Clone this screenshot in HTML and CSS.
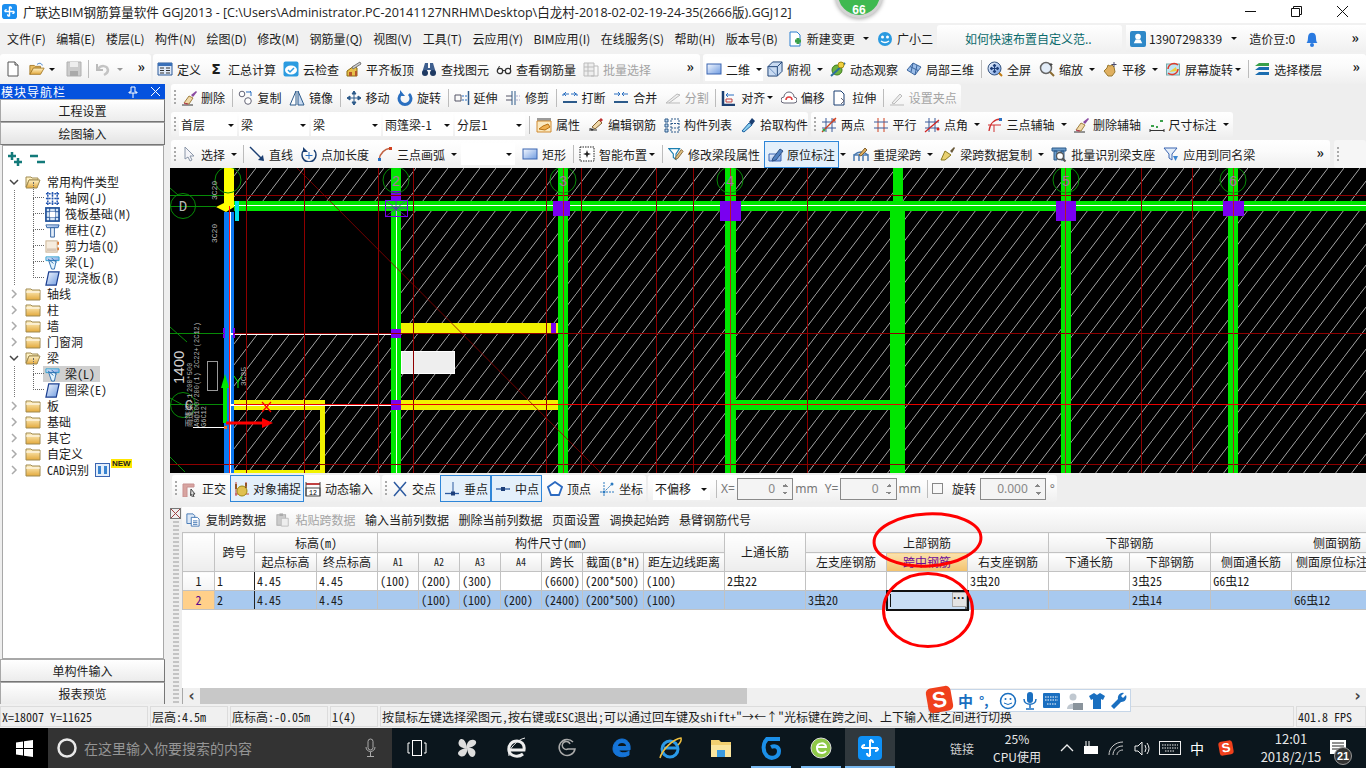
FILE: index.html
```html
<!DOCTYPE html>
<html lang="zh-CN">
<head>
<meta charset="utf-8">
<title>广联达BIM钢筋算量软件 GGJ2013</title>
<link rel="stylesheet" href="styles.css">
</head>
<body>
<svg class="defs" xmlns="http://www.w3.org/2000/svg">
<defs>
<linearGradient id="gb" x1="0" y1="0" x2="1" y2="1"><stop offset="0" stop-color="#f4f8ff"/><stop offset="1" stop-color="#6f9be0"/></linearGradient>
<linearGradient id="gf" x1="0" y1="0" x2="0" y2="1"><stop offset="0" stop-color="#fff3c8"/><stop offset="1" stop-color="#e3a93c"/></linearGradient>
<pattern id="hatch" width="16" height="21" patternUnits="userSpaceOnUse" x="0" y="0"><path d="M-1 22.300L17 -1.300" stroke="#cfcfcf" stroke-width=".8" fill="none"/></pattern>
<symbol id="new" viewBox="0 0 16 16"><path d="M3 1h7l3 3v11H3z" fill="#fff" stroke="#555"/><path d="M10 1v3h3" fill="#ddd" stroke="#555"/></symbol>
<symbol id="open" viewBox="0 0 18 16"><path d="M1 14V4h5l1 1h6v2H5z" fill="#e8bd64" stroke="#a67a28"/><path d="M1 14h12l4-7H5z" fill="url(#gf)" stroke="#a67a28"/><path d="M9 3c2-2 5-2 6 1" fill="none" stroke="#2a6fc0"/></symbol>
<symbol id="save" viewBox="0 0 16 16"><path d="M1 1h14v14H1z" fill="#ccc" stroke="#b0b0b0"/><path d="M4 1h8v5H4z" fill="#eee"/><path d="M4 10h8v5H4z" fill="#aaa"/></symbol>
<symbol id="undo" viewBox="0 0 16 16"><path d="M2 3v6h6" fill="none" stroke="#bbb" stroke-width="2"/><path d="M3 8c3-4 9-4 10 1 0 2-2 4-4 5" fill="none" stroke="#c4c4c4" stroke-width="2.5"/></symbol>
<symbol id="def" viewBox="0 0 16 16"><path d="M1 2h14v12H1z" fill="#dfe9f7" stroke="#2c5a9a"/><path d="M1 2h14v3H1z" fill="#3a70b8"/><path d="M3 7h4M3 9.5h4M3 12h4M9 7h4M9 9.5h4M9 12h4" stroke="#333"/></symbol>
<symbol id="cloud" viewBox="0 0 16 16"><rect x="0.5" y="0.5" width="15" height="15" rx="2" fill="#2b9be0"/><ellipse cx="8" cy="9" rx="6" ry="4.5" fill="#fff"/><path d="M5 9l2 2 4-4" fill="none" stroke="#2b9be0" stroke-width="1.5"/></symbol>
<symbol id="level" viewBox="0 0 16 16"><path d="M1 10l7-5 3 2v8H1z" fill="#e8c04a" stroke="#8a6a10"/><path d="M6 6l8-5 1 2-8 5z" fill="#cfcfcf" stroke="#777"/><path d="M3 11h3v4H3zM9 10h2v5H9z" fill="#b5562a"/></symbol>
<symbol id="bino" viewBox="0 0 16 16"><path d="M4 2h3v5h2V2h3l3 10H10V9H6v3H1z" fill="#3e5f8f"/><circle cx="4" cy="12" r="3" fill="#1f3a62"/><circle cx="12" cy="12" r="3" fill="#1f3a62"/></symbol>
<symbol id="glass" viewBox="0 0 16 16"><circle cx="4" cy="10" r="2.7" fill="#fff" stroke="#333" stroke-width="1.3"/><circle cx="12" cy="10" r="2.7" fill="#fff" stroke="#333" stroke-width="1.3"/><path d="M6.5 9.5h3M1.5 9l2-4M14.5 9V4" fill="none" stroke="#333"/></symbol>
<symbol id="batch" viewBox="0 0 16 16"><path d="M1 2h10v13H1z" fill="#eee" stroke="#bbb"/><path d="M1 6h10M1 10h10M5 2v13M11 5h4v10H8" fill="none" stroke="#bbb"/></symbol>
<symbol id="rect" viewBox="0 0 16 16"><rect x="1" y="3" width="14" height="10" fill="url(#gb)" stroke="#3a64b0"/></symbol>
<symbol id="cube" viewBox="0 0 17 17"><path d="M1 6l5-5h10v10l-5 5H1z" fill="#c9dbf2" stroke="#1b3f72"/><path d="M1 6h10l5-5M11 6v10" fill="none" stroke="#1b3f72"/><path d="M1 6l10 10" stroke="#6d8fc0"/></symbol>
<symbol id="orbit" viewBox="0 0 16 16"><circle cx="7" cy="9" r="5" fill="#6db33f" stroke="#3d7a1d"/><path d="M1 15L15 2" stroke="#2c6e9e" stroke-width="2"/><circle cx="11" cy="4" r="3" fill="#f0d040" stroke="#a08a10"/></symbol>
<symbol id="local" viewBox="0 0 16 16"><path d="M1 9l6-7 8 4-6 8z" fill="#9bbde8" stroke="#3c669e"/><path d="M4 5.500l8 4M7 2l-2 9M11 4l-2 10" stroke="#3c669e" fill="none"/></symbol>
<symbol id="full" viewBox="0 0 16 16"><circle cx="7.500" cy="7.500" r="6.500" fill="url(#gb)" stroke="#33527e"/><path d="M7.500 3v9M3 7.500h9M7.500 3l-1.500 2h3zM7.500 12l-1.500-2h3zM3 7.500l2-1.500v3zM12 7.500l-2-1.500v3z" stroke="#1d3f7a" fill="#1d3f7a"/><path d="M12 12l3 3" stroke="#c07a10" stroke-width="2"/></symbol>
<symbol id="zoomi" viewBox="0 0 16 16"><circle cx="7" cy="7" r="5.500" fill="#e2ecf8" stroke="#666" stroke-width="1.500"/><path d="M11 11l4 4" stroke="#8a6a30" stroke-width="2"/><path d="M12 2v3M10.500 3.500h3" stroke="#444"/></symbol>
<symbol id="hand" viewBox="0 0 16 16"><path d="M2 10l3-3 1-3 2 1 2-1 2 2 1 5-3 4H6z" fill="#e0b060" stroke="#9a7a30"/><path d="M12 1v5M9.500 3.500h5" stroke="#4a4a6a"/></symbol>
<symbol id="srot" viewBox="0 0 16 16"><rect x="1.500" y="3" width="13" height="11" fill="#bfe4f4" stroke="#7aa"/><path d="M4 11l7-5 1 4z" fill="#f0d040"/><path d="M3 8a6 6 0 0 1 10-4M13 8a6 6 0 0 1-10 4" fill="none" stroke="#e03a2a" stroke-width="1.500"/></symbol>
<symbol id="floors" viewBox="0 0 16 16"><path d="M1 14l4-3h10v3zM1 9l4-3h10v3z" fill="#1b6db0"/><path d="M1 5l4-3h10v3z" fill="#3aa04a"/></symbol>
<symbol id="erase" viewBox="0 0 16 16"><path d="M1 15h11" stroke="#333"/><path d="M10 5l5-4 1 1-4 5z" fill="#8a4aa0"/><path d="M3 13l5-7 4 2-4 6z" fill="#f0d8a8" stroke="#a08040"/><path d="M3 13l2 1 2 0" stroke="#d04060"/></symbol>
<symbol id="copy" viewBox="0 0 16 16"><circle cx="4" cy="4" r="2.800" fill="#fff" stroke="#667"/><circle cx="10" cy="11" r="3.300" fill="#fff" stroke="#667"/><path d="M8 2h5l-1-1m1 1v4" fill="none" stroke="#2a6fc0"/></symbol>
<symbol id="mirror" viewBox="0 0 16 16"><path d="M7 1v14H1z" fill="#fff" stroke="#2c5a8a"/><path d="M9 1v14h6z" fill="#c9dbf2" stroke="#2c5a8a"/></symbol>
<symbol id="move" viewBox="0 0 16 16"><path d="M8 1v14M1 8h14M8 1L6 4h4zM8 15l-2-3h4zM1 8l3-2v4zM15 8l-3-2v4z" stroke="#2c5a8a" fill="#2c5a8a"/></symbol>
<symbol id="rot" viewBox="0 0 16 16"><path d="M4 4a6 6 0 1 0 8 0" fill="none" stroke="#2a6fc0" stroke-width="3"/><path d="M3 0v6h5z" fill="#2a6fc0"/></symbol>
<symbol id="ext" viewBox="0 0 16 16"><path d="M14.500 1v14" stroke="#2c5a8a" stroke-width="1.500"/><path d="M1 5h6v6H1z" fill="none" stroke="#556"/><path d="M8 6h5M8 10h5" stroke="#2a6fc0" stroke-dasharray="2 1"/></symbol>
<symbol id="trim" viewBox="0 0 16 16"><path d="M7 1v14M10 1v14" stroke="#2c5a8a"/><path d="M1 6h6M1 10h6" stroke="#556"/><path d="M11 6h4M11 10h4" stroke="#aac" stroke-dasharray="2 1"/></symbol>
<symbol id="brk" viewBox="0 0 16 16"><path d="M1 6V4h6M15 6V4H9" fill="none" stroke="#2a6fc0"/><path d="M1 12h14" stroke="#2c5a8a" stroke-width="2"/><path d="M4 2l-2 2 2 2M12 2l2 2-2 2" fill="none" stroke="#2a6fc0"/></symbol>
<symbol id="mrg" viewBox="0 0 16 16"><path d="M1 4h6M9 4h6" stroke="#2a6fc0"/><path d="M5 2l2 2-2 2M11 2L9 4l2 2" fill="none" stroke="#2a6fc0"/><path d="M1 12h14" stroke="#2c5a8a" stroke-width="2"/></symbol>
<symbol id="spl" viewBox="0 0 16 16"><path d="M1 13h14M1 13l11-9 3 1-11 8" fill="#eee" stroke="#bbb"/></symbol>
<symbol id="alg" viewBox="0 0 16 16"><path d="M2 1v14h12" fill="none" stroke="#1b3f72" stroke-width="2.500"/><path d="M5 5h8M5 5l2-2M5 5l2 2" fill="none" stroke="#2a6fc0"/><path d="M5 9h6v3H5z" fill="none" stroke="#c04040"/></symbol>
<symbol id="off" viewBox="0 0 16 16"><path d="M3 13a3 3 0 0 1 0-6 5 5 0 0 1 10 0 3 3 0 0 1 0 6z" fill="#fff" stroke="#667"/><path d="M5 10a3 3 0 0 1 6 0" fill="none" stroke="#e04040" stroke-width="1.500"/></symbol>
<symbol id="strc" viewBox="0 0 16 16"><path d="M2 1h7l3 3v11H2z" fill="#fff" stroke="#1b3f72"/><path d="M9 8l3 3-3 3" fill="none" stroke="#667"/></symbol>
<symbol id="grip2" viewBox="0 0 16 16"><path d="M1 15h14M3 13l8-9 2 2-8 8z" fill="#eee" stroke="#bbb"/></symbol>
<symbol id="prop" viewBox="0 0 16 16"><path d="M1 1h14v3H1z" fill="#9a9a9a"/><path d="M1 4h14v11H1z" fill="#fbe9c0" stroke="#d08a30"/><path d="M3 12l4-3 5-2 2 3-5 3z" fill="#f0b050" stroke="#b87010"/></symbol>
<symbol id="edit" viewBox="0 0 16 16"><path d="M1 13h8" stroke="#333"/><path d="M4 10l7-7 3 3-7 6z" fill="#f0d8a8" stroke="#806030"/><path d="M1 11l5 1-2 2" fill="#333"/><path d="M11 3l2-2 2 2-2 2" fill="#c03030"/></symbol>
<symbol id="list" viewBox="0 0 16 16"><path d="M1 2h3v3H1zM1 7h3v3H1zM1 12h3v3H1z" fill="#c0d8ee" stroke="#2c5a8a"/><path d="M7 2h8v13H7zM7 6.500h8M7 11h8" fill="none" stroke="#2c5a8a" stroke-dasharray="2 1"/></symbol>
<symbol id="pick" viewBox="0 0 16 16"><path d="M2 14l7-8 3 2-8 7z" fill="#8ad0f0" stroke="#1b5fa0"/><path d="M9 5l3-4 3 3-3 4z" fill="#1b3f72"/></symbol>
<symbol id="twop" viewBox="0 0 16 16"><path d="M5 1v14M11 1v14M1 5h14M1 11h14" stroke="#3a5a9a"/><path d="M1 15L15 1" stroke="#d04020" stroke-width="1.200"/><circle cx="3" cy="13" r="1.500" fill="#3aa04a"/><circle cx="13" cy="3" r="1.500" fill="#d04020"/></symbol>
<symbol id="para" viewBox="0 0 16 16"><path d="M5 1v14M11 1v14" stroke="#d04020"/><path d="M1 5h14M1 11h14" stroke="#3a5a9a"/></symbol>
<symbol id="angl" viewBox="0 0 16 16"><path d="M5 1v14M11 1v14M1 5h14M1 11h14" stroke="#3a5a9a"/><path d="M1 15L15 3" stroke="#d02020" stroke-width="1.200"/><circle cx="14" cy="12" r="1.500" fill="#d02020"/></symbol>
<symbol id="arca" viewBox="0 0 16 16"><path d="M1 8h13M7 8v7" stroke="#d03030"/><path d="M2 14C3 6 8 2 14 2" fill="none" stroke="#d03030" stroke-width="1.300"/><rect x="12" y="1" width="3" height="3" fill="#2a6fc0"/></symbol>
<symbol id="dim" viewBox="0 0 16 16"><path d="M1 12v3M15 12v3M1 13.500h14" stroke="#333"/><path d="M2 8h3v2H2zM11 3h3v2h-3z" fill="#3aa04a"/><path d="M7 9h2v2H7z" fill="#3aa04a"/></symbol>
<symbol id="sel" viewBox="0 0 16 16"><path d="M4 1v12l3-2 2 4 2-1-2-4h4z" fill="#f4f4f8" stroke="#8a96a8"/></symbol>
<symbol id="line" viewBox="0 0 16 16"><path d="M1 1l13 13" stroke="#1b3f72" stroke-width="1.500"/><path d="M15 15l-6-1 5-5z" fill="#1b3f72"/></symbol>
<symbol id="plen" viewBox="0 0 16 16"><path d="M3 4a7 7 0 1 0 10 0" fill="none" stroke="#1b3f72" stroke-width="1.500"/><path d="M2 1v5h5z" fill="#1b3f72"/><path d="M8 6v7M4.500 9.500h7" stroke="#2a6fc0"/></symbol>
<symbol id="arc" viewBox="0 0 16 16"><path d="M2 14C3 6 8 3 14 2" fill="none" stroke="#c06040" stroke-width="1.500"/><rect x="1" y="12" width="3" height="3" fill="#2a6fc0"/><rect x="12" y="1" width="3" height="3" fill="#d04020"/></symbol>
<symbol id="smart" viewBox="0 0 16 16"><rect x="1" y="1" width="14" height="14" fill="#fff" stroke="#222" stroke-dasharray="1.500 1"/><path d="M8 4l1 3 3 1-3 1-1 3-1-3-3-1 3-1z" fill="#222"/></symbol>
<symbol id="modi" viewBox="0 0 18 16"><path d="M1 2h12L9 8v6L6 12V8z" fill="#fff" stroke="#1b7fb0" stroke-width="1.300"/><path d="M9 11l6-8 2 2-6 8-3 1z" fill="#e0c080" stroke="#806030"/></symbol>
<symbol id="inpl" viewBox="0 0 16 16"><path d="M1 8h12v7H1z" fill="url(#gb)" stroke="#3a64b0"/><path d="M5 12l7-9 3 2-7 9-4 1z" fill="#5080c0" stroke="#304f80"/></symbol>
<symbol id="rext" viewBox="0 0 16 16"><path d="M1 15V9h5v6M10 15V9h5v6" fill="none" stroke="#4a7ab0" stroke-width="1.500"/><path d="M1 9q7-6 14 0" fill="none" stroke="#4a7ab0" stroke-width="1.500"/><path d="M6 9l6-7 2 2-6 6z" fill="#e0b060" stroke="#806030"/></symbol>
<symbol id="brm" viewBox="0 0 16 16"><path d="M10 5l4-4 1 1-3 5z" fill="#6a5a3a"/><path d="M1 14l4-9 6 4-6 5z" fill="#e8d070" stroke="#8a7a20"/></symbol>
<symbol id="bid" viewBox="0 0 16 16"><path d="M1 2h14v3H1zM3 5h3v9H3zM10 5h3v9h-3z" fill="#6a9ac8" stroke="#2c5a8a"/><circle cx="9" cy="10" r="3.500" fill="#fff" stroke="#555" stroke-width="1.300"/><path d="M11.500 12.500l3 3" stroke="#555" stroke-width="2"/></symbol>
<symbol id="appl" viewBox="0 0 16 16"><path d="M1 2h13L9 8v6L6 12V8z" fill="#e4eefa" stroke="#3a64b0"/><path d="M10 10h5l-2.500 5z" fill="#3a84d0"/></symbol>
<symbol id="orth" viewBox="0 0 16 16"><path d="M1 3h11v3H5v10H1z" fill="#d8a4a0" stroke="#c89090"/><path d="M9 8l4 5-2 0 1 3-1.500 .5-1-3-1 1z" fill="#ddd" stroke="#444"/></symbol>
<symbol id="snap" viewBox="0 0 16 16"><path d="M2 1v14M12 1v4M1 13h14" stroke="#c04040"/><circle cx="8" cy="10" r="5" fill="#e0c050" stroke="#a08a10"/><path d="M12 2v5M2 3v5" stroke="#804000" stroke-width="1.500"/></symbol>
<symbol id="dyn" viewBox="0 0 16 16"><path d="M1 2h14v2H1z" fill="#c04040"/><rect x="1" y="7" width="14" height="8" fill="#fff" stroke="#444"/><path d="M1 1v14M15 1v14" stroke="#444"/><text x="4" y="14" font-size="6.500" font-family="Liberation Mono">12</text></symbol>
<symbol id="xp" viewBox="0 0 16 16"><path d="M2 1l12 14M14 1L2 15" stroke="#2c5aa0" stroke-width="1.500"/></symbol>
<symbol id="perp" viewBox="0 0 16 16"><path d="M9 1v11" stroke="#2c5aa0"/><path d="M1 12.500h14" stroke="#2c5aa0" stroke-width="1.300"/><rect x="7" y="10.500" width="4" height="4" fill="#1d3f7a"/></symbol>
<symbol id="midp" viewBox="0 0 16 16"><path d="M1 8h14" stroke="#2c5aa0" stroke-width="1.300"/><rect x="6" y="6" width="4" height="4" fill="#1d3f7a"/></symbol>
<symbol id="vert" viewBox="0 0 16 16"><path d="M8 1l7 5-3 8H4L1 6z" fill="#fff" stroke="#2c6ac0" stroke-width="1.800"/></symbol>
<symbol id="coord" viewBox="0 0 16 16"><path d="M5 1v14M1 11h14M5 11L13 3" stroke="#2c7ac0" stroke-dasharray="2 1"/><circle cx="13" cy="3" r="1.500" fill="#2c7ac0"/><circle cx="5" cy="11" r="1.500" fill="#2c7ac0"/></symbol>
<symbol id="cp2" viewBox="0 0 16 16"><path d="M1 1h7l2 2v9H1z" fill="#dce8f6" stroke="#3a70b0"/><path d="M6 5h7l2 2v8H6z" fill="#fff" stroke="#3a70b0"/><path d="M8 9h5M8 11h5M8 13h5" stroke="#3a70b0"/></symbol>
<symbol id="pst" viewBox="0 0 16 16"><rect x="1" y="2" width="10" height="12" fill="#ccc" stroke="#aaa"/><rect x="4" y="0.500" width="4" height="3" fill="#aaa"/><path d="M6 6h8v9H6z" fill="#eee" stroke="#bbb"/></symbol>
<symbol id="tgrid" viewBox="0 0 16 16"><path d="M3 1v14M8 1v14M13 1v14M1 3h14M1 8h14M1 13h14" stroke="#2456b0" stroke-width="1.600" stroke-dasharray="2 1"/></symbol>
<symbol id="traft" viewBox="0 0 16 16"><rect x="1" y="1" width="14" height="14" fill="#d8e8f8" stroke="#1f5098" stroke-width="1.800"/><path d="M5 1v14M11 1v14M1 5h14M1 11h14" stroke="#1f5098"/><rect x="5" y="5" width="6" height="6" fill="#fff"/></symbol>
<symbol id="tcol" viewBox="0 0 16 16"><path d="M1 2h14l-1 3H2z" fill="url(#gb)" stroke="#2c5fa0"/><path d="M6 5h4v10H6z" fill="#e4eefa" stroke="#2c5fa0"/></symbol>
<symbol id="twall" viewBox="0 0 16 16"><rect x="1" y="2" width="12" height="12" fill="#f6ecde" stroke="#c8b090"/><path d="M2 10h10v3H2z" fill="#d8c8b8"/><path d="M14 3v3M14 9v3" stroke="#d06010" stroke-width="1.500"/></symbol>
<symbol id="tbeam" viewBox="0 0 16 16"><path d="M1 2h14v4H1z" fill="url(#gb)" stroke="#2c9fd0"/><path d="M4 6h8l-2 9H7z" fill="#e4f4fc" stroke="#2c6fb0"/><path d="M3 4l6 5M7 3l5 5" stroke="#2c6fb0"/></symbol>
<symbol id="tslab" viewBox="0 0 16 16"><path d="M4 1h11l-3 14H1z" fill="url(#gb)" stroke="#1b3f90" stroke-width="1.300"/></symbol>
<symbol id="fldo" viewBox="0 0 16 14"><path d="M1 12V2h5l1 1h6v2H4z" fill="#fff1c0" stroke="#a08a50"/><path d="M1 13h11l3-8H4z" fill="url(#gf)" stroke="#a08a50"/></symbol>
<symbol id="fldc" viewBox="0 0 16 14"><path d="M1 2h5l1 1h8v10H1z" fill="url(#gf)" stroke="#a08a50"/><path d="M1 5h14" stroke="#fff"/></symbol>
<symbol id="chevr" viewBox="0 0 8 10"><path d="M2 1l4 4-4 4" fill="none" stroke="#aaa" stroke-width="1.500"/></symbol>
<symbol id="chevd" viewBox="0 0 10 8"><path d="M1 2l4 4 4-4" fill="none" stroke="#444" stroke-width="1.500"/></symbol>
<symbol id="gf-logo" viewBox="0 0 16 16"><rect width="16" height="16" rx="3" fill="#1c8ff0"/><path d="M8 3v10M3 8h10M8 3a2 2 0 0 1 2 2M8 13a2 2 0 0 1-2-2M3 8a2 2 0 0 1 2-2M13 8a2 2 0 0 1-2 2" fill="none" stroke="#fff" stroke-width="1.500"/></symbol>
</defs>
</svg>

<div class="app">
  <header class="title">
    <svg class="logo"><use href="#gf-logo"/></svg>
    <span class="title-text">广联达BIM钢筋算量软件 GGJ2013 - [C:\Users\Administrator.PC-20141127NRHM\Desktop\白龙村-2018-02-02-19-24-35(2666版).GGJ12]</span>
    <div class="winbtns">
      <svg width="11" height="11" viewBox="0 0 11 11"><path d="M0 5.500h11" stroke="#111"/></svg>
      <svg width="11" height="11" viewBox="0 0 11 11"><path d="M.5 2.500h8v8h-8zM2.500 2.500v-2h8v8h-2" fill="none" stroke="#111"/></svg>
      <svg width="11" height="11" viewBox="0 0 11 11"><path d="M0 0l11 11M11 0L0 11" stroke="#111"/></svg>
    </div>
  </header>

  <nav class="menu">
    <span class="m">文件(F)</span><span class="m">编辑(E)</span><span class="m">楼层(L)</span><span class="m">构件(N)</span><span class="m">绘图(D)</span><span class="m">修改(M)</span><span class="m">钢筋量(Q)</span><span class="m">视图(V)</span><span class="m">工具(T)</span><span class="m">云应用(Y)</span><span class="m">BIM应用(I)</span><span class="m">在线服务(S)</span><span class="m">帮助(H)</span><span class="m last-m">版本号(B)</span>
    <span class="b menu-b"><svg class="i" viewBox="0 0 16 16"><path d="M3 1h7l3 3v11H3z" fill="#fff" stroke="#2a7fd0"/><path d="M8 10h6M11 7v6" stroke="#3aa04a" stroke-width="3"/></svg>新建变更<i class="ar"></i></span>
    <span class="b menu-b"><svg class="i" viewBox="0 0 16 16"><circle cx="8" cy="8" r="7" fill="#2a9ae0"/><circle cx="5.500" cy="6" r="1.500" fill="#fff"/><circle cx="10.500" cy="6" r="1.500" fill="#fff"/><path d="M4 10q4 3 8 0" fill="none" stroke="#fff" stroke-width="1.300"/></svg>广小二</span>
    <div class="tip-card">如何快速布置自定义范..</div>
    <div class="user-card">
      <svg class="i" viewBox="0 0 17 17"><rect width="17" height="17" rx="2" fill="#2e88c8"/><circle cx="8.500" cy="6" r="3" fill="#fff"/><path d="M4 13h9l-2-4H6z" fill="#fff"/></svg>
      <span>13907298339</span><i class="ar"></i><span class="beans">造价豆:0</span>
      <svg class="i bell" viewBox="0 0 13 16"><path d="M1 12c2-2 1-5 2-8 1-3 6-3 7 0 1 3 0 6 2 8z" fill="#2a7ae0"/><circle cx="6.500" cy="14" r="2" fill="#2a7ae0"/></svg>
      <span class="more">»</span>
    </div>
  </nav>

  <div class="toprow">
    <div class="card c1">
      <svg class="i"><use href="#new"/></svg><svg class="i open"><use href="#open"/></svg><i class="ar t"></i><svg class="i save"><use href="#save"/></svg><span class="s"></span><svg class="i"><use href="#undo"/></svg><i class="ar t gr"></i><span class="more">»</span>
    </div>
    <div class="card c2">
      <span class="b"><svg class="i"><use href="#def"/></svg>定义</span>
      <span class="b"><span class="sig">Σ</span>汇总计算</span>
      <span class="b"><svg class="i"><use href="#cloud"/></svg>云检查</span>
      <span class="b"><svg class="i"><use href="#level"/></svg>平齐板顶</span>
      <span class="b"><svg class="i"><use href="#bino"/></svg>查找图元</span>
      <span class="b"><svg class="i"><use href="#glass"/></svg>查看钢筋量</span>
      <span class="b dis"><svg class="i"><use href="#batch"/></svg>批量选择</span>
      <span class="more">»</span>
    </div>
    <div class="card c3">
      <span class="b bx"><svg class="i"><use href="#rect"/></svg>二维<i class="ar"></i></span>
      <span class="b"><svg class="i"><use href="#cube"/></svg>俯视<i class="ar"></i></span>
      <span class="b"><svg class="i"><use href="#orbit"/></svg>动态观察</span>
      <span class="b"><svg class="i"><use href="#local"/></svg>局部三维</span><span class="s"></span>
      <span class="b"><svg class="i"><use href="#full"/></svg>全屏</span>
      <span class="b"><svg class="i"><use href="#zoomi"/></svg>缩放<i class="ar"></i></span>
      <span class="b"><svg class="i"><use href="#hand"/></svg>平移<i class="ar"></i></span>
      <span class="b"><svg class="i"><use href="#srot"/></svg>屏幕旋转<i class="ar n"></i></span><span class="s"></span>
      <span class="b"><svg class="i"><use href="#floors"/></svg>选择楼层</span>
      <span class="more">»</span>
    </div>
  </div>

  <div class="work">
    <aside class="nav">
      <div class="nav-head"><span>模块导航栏</span><span class="pins"><svg width="10" height="12" viewBox="0 0 10 12"><path d="M3 1h4v5h2v1H1V6h2zM5 7v5" fill="none" stroke="#fff"/></svg><svg width="9" height="9" viewBox="0 0 9 9"><path d="M0 0l9 9M9 0L0 9" stroke="#fff"/></svg></span></div>
      <button class="navbtn">工程设置</button>
      <button class="navbtn on">绘图输入</button>
      <div class="tree">
        <div class="tree-tools"><svg width="16" height="16" viewBox="0 0 16 16"><path d="M1 5h8M5 1v8M7 11h8M11 7v8" stroke="#137a7a" stroke-width="2.500"/></svg><svg width="16" height="16" viewBox="0 0 16 16"><path d="M0 5h8M7 11h8" stroke="#137a7a" stroke-width="2.500"/></svg></div>
        <div class="tr"><svg class="ch"><use href="#chevd"/></svg><svg class="fd"><use href="#fldo"/></svg><span>常用构件类型</span></div>
        <div class="tr sub"><svg class="ti"><use href="#tgrid"/></svg><span>轴网(J)</span></div>
        <div class="tr sub"><svg class="ti"><use href="#traft"/></svg><span>筏板基础(M)</span></div>
        <div class="tr sub"><svg class="ti"><use href="#tcol"/></svg><span>框柱(Z)</span></div>
        <div class="tr sub"><svg class="ti"><use href="#twall"/></svg><span>剪力墙(Q)</span></div>
        <div class="tr sub"><svg class="ti"><use href="#tbeam"/></svg><span>梁(L)</span></div>
        <div class="tr sub last"><svg class="ti"><use href="#tslab"/></svg><span>现浇板(B)</span></div>
        <div class="tr"><svg class="ch"><use href="#chevr"/></svg><svg class="fd"><use href="#fldc"/></svg><span>轴线</span></div>
        <div class="tr"><svg class="ch"><use href="#chevr"/></svg><svg class="fd"><use href="#fldc"/></svg><span>柱</span></div>
        <div class="tr"><svg class="ch"><use href="#chevr"/></svg><svg class="fd"><use href="#fldc"/></svg><span>墙</span></div>
        <div class="tr"><svg class="ch"><use href="#chevr"/></svg><svg class="fd"><use href="#fldc"/></svg><span>门窗洞</span></div>
        <div class="tr"><svg class="ch"><use href="#chevd"/></svg><svg class="fd"><use href="#fldo"/></svg><span>梁</span></div>
        <div class="tr sub selrow"><svg class="ti"><use href="#tbeam"/></svg><span>梁(L)</span></div>
        <div class="tr sub last"><svg class="ti"><use href="#tslab"/></svg><span>圈梁(E)</span></div>
        <div class="tr"><svg class="ch"><use href="#chevr"/></svg><svg class="fd"><use href="#fldc"/></svg><span>板</span></div>
        <div class="tr"><svg class="ch"><use href="#chevr"/></svg><svg class="fd"><use href="#fldc"/></svg><span>基础</span></div>
        <div class="tr"><svg class="ch"><use href="#chevr"/></svg><svg class="fd"><use href="#fldc"/></svg><span>其它</span></div>
        <div class="tr"><svg class="ch"><use href="#chevr"/></svg><svg class="fd"><use href="#fldc"/></svg><span>自定义</span></div>
        <div class="tr"><svg class="ch"><use href="#chevr"/></svg><svg class="fd"><use href="#fldc"/></svg><span>CAD识别</span><svg class="cad" viewBox="0 0 15 14"><rect x=".5" y=".5" width="14" height="13" fill="#e4eefa" stroke="#3a64b0"/><path d="M3 3h3v8H3zM9 3h3v8H9z" fill="#3a84d0"/></svg><span class="newb">NEW</span></div>
      </div>
      <button class="navbtn">单构件输入</button>
      <button class="navbtn">报表预览</button>
    </aside>

    <main class="right">
      <div class="row r2"><div class="card">
        <span class="grip"></span>
        <span class="b"><svg class="i"><use href="#erase"/></svg>删除</span><span class="s"></span>
        <span class="b"><svg class="i"><use href="#copy"/></svg>复制</span>
        <span class="b"><svg class="i"><use href="#mirror"/></svg>镜像</span><span class="s"></span>
        <span class="b"><svg class="i"><use href="#move"/></svg>移动</span>
        <span class="b"><svg class="i"><use href="#rot"/></svg>旋转</span><span class="s"></span>
        <span class="b"><svg class="i"><use href="#ext"/></svg>延伸</span>
        <span class="b"><svg class="i"><use href="#trim"/></svg>修剪</span><span class="s"></span>
        <span class="b"><svg class="i"><use href="#brk"/></svg>打断</span>
        <span class="b"><svg class="i"><use href="#mrg"/></svg>合并</span>
        <span class="b dis"><svg class="i"><use href="#spl"/></svg>分割</span><span class="s"></span>
        <span class="b"><svg class="i"><use href="#alg"/></svg>对齐<i class="ar n"></i></span>
        <span class="b"><svg class="i"><use href="#off"/></svg>偏移</span>
        <span class="b"><svg class="i"><use href="#strc"/></svg>拉伸</span><span class="s"></span>
        <span class="b dis"><svg class="i"><use href="#grip2"/></svg>设置夹点</span>
      </div></div>

      <div class="row r3">
        <div class="card c31">
          <span class="grip g-tight"></span>
          <span class="combo w58">首层<i class="ar"></i></span>
          <span class="combo w70">梁<i class="ar"></i></span>
          <span class="combo w70">梁<i class="ar"></i></span>
          <span class="combo w70">雨篷梁-1<i class="ar"></i></span>
          <span class="combo w70">分层1<i class="ar"></i></span><span class="s s3"></span>
          <span class="b"><svg class="i"><use href="#prop"/></svg>属性</span>
          <span class="b"><svg class="i"><use href="#edit"/></svg>编辑钢筋</span>
          <span class="b"><svg class="i"><use href="#list"/></svg>构件列表</span>
          <span class="b"><svg class="i"><use href="#pick"/></svg>拾取构件</span>
        </div>
        <div class="card c32">
          <span class="grip"></span>
          <span class="b"><svg class="i"><use href="#twop"/></svg>两点</span>
          <span class="b"><svg class="i"><use href="#para"/></svg>平行</span>
          <span class="b"><svg class="i"><use href="#angl"/></svg>点角<i class="ar"></i></span>
          <span class="b"><svg class="i"><use href="#arca"/></svg>三点辅轴<i class="ar"></i></span>
          <span class="b"><svg class="i"><use href="#erase"/></svg>删除辅轴</span>
          <span class="b"><svg class="i"><use href="#dim"/></svg>尺寸标注<i class="ar"></i></span>
        </div>
      </div>

      <div class="row r4">
        <div class="card c41">
          <span class="grip"></span>
          <span class="b"><svg class="i"><use href="#sel"/></svg>选择<i class="ar"></i></span><span class="s"></span>
          <span class="b"><svg class="i"><use href="#line"/></svg>直线</span>
          <span class="b"><svg class="i"><use href="#plen"/></svg>点加长度</span>
          <span class="b"><svg class="i"><use href="#arc"/></svg>三点画弧<i class="ar"></i></span>
          <span class="combo w54"><i class="ar"></i></span>
          <span class="b"><svg class="i"><use href="#rect"/></svg>矩形</span><span class="s"></span>
          <span class="b"><svg class="i"><use href="#smart"/></svg>智能布置<i class="ar n"></i></span><span class="s"></span>
          <span class="b"><svg class="i"><use href="#modi"/></svg>修改梁段属性</span>
          <span class="b act"><svg class="i"><use href="#inpl"/></svg>原位标注</span><i class="ar after"></i>
          <span class="b"><svg class="i"><use href="#rext"/></svg>重提梁跨<i class="ar"></i></span>
          <span class="b"><svg class="i"><use href="#brm"/></svg>梁跨数据复制<i class="ar"></i></span>
          <span class="b"><svg class="i"><use href="#bid"/></svg>批量识别梁支座</span>
          <span class="b"><svg class="i"><use href="#appl"/></svg>应用到同名梁</span>
          <span class="more">»</span>
        </div>
        <div class="card c42"><span class="grip"></span></div>
      </div>

      <svg class="cad-canvas" viewBox="170 168 1196 305" width="1196" height="305">
        <rect x="170" y="168" width="1196" height="305" fill="#000"/>
        <rect x="234" y="168" width="157" height="33" fill="url(#hatch)"/>
        <rect x="234" y="334" width="157" height="139" fill="url(#hatch)"/>
        <rect x="401" y="168" width="965" height="305" fill="url(#hatch)"/>
        <g class="crisp">
          <rect x="391" y="168" width="10" height="305" fill="#00e600"/>
          <rect x="558" y="168" width="10" height="305" fill="#00e600"/>
          <rect x="725" y="168" width="11" height="305" fill="#00e600"/>
          <rect x="893" y="168" width="10" height="33" fill="#00e600"/>
          <rect x="890" y="211" width="15" height="262" fill="#00e600"/>
          <rect x="1061" y="168" width="10" height="305" fill="#00e600"/>
          <rect x="1228" y="168" width="10" height="305" fill="#00e600"/>
          <rect x="736" y="400" width="154" height="10" fill="#00e600"/>
          <rect x="234" y="201" width="1132" height="10" fill="#00e600"/>
          <rect x="234" y="205" width="1132" height="1" fill="#fff"/>
          <rect x="396" y="211" width="1" height="262" fill="#fff"/>
          <rect x="224" y="212" width="10" height="261" fill="#0a78f0"/>
          <rect x="230" y="212" width="1" height="261" fill="#fff"/>
          <rect x="224" y="168" width="10" height="38" fill="#ffff00"/>
          <rect x="235" y="201" width="4" height="20" fill="#00e0e8"/>
          <rect x="401" y="323" width="150" height="10" fill="#f2f200"/>
          <rect x="551" y="323" width="5" height="10" fill="#7a00f0"/>
          <rect x="556" y="323" width="2" height="10" fill="#f2f200"/>
          <rect x="401" y="400" width="157" height="10" fill="#f2f200"/>
          <rect x="234" y="400" width="91" height="10" fill="#f2f200"/>
          <rect x="320" y="410" width="5" height="63" fill="#f2f200"/>
          <rect x="234" y="470" width="91" height="3" fill="#f2f200"/>
          <rect x="229" y="333" width="162" height="2" fill="#fff"/>
          <rect x="229" y="404" width="162" height="2" fill="#fff"/>
          <rect x="401" y="351" width="53" height="22" fill="#eee" stroke="#fff"/>
          <rect x="391" y="191" width="10" height="10" fill="#7a00f0"/>
          <rect x="553" y="201" width="17" height="15" fill="#7a00f0"/>
          <rect x="720" y="201" width="21" height="20" fill="#7a00f0"/>
          <rect x="1056" y="201" width="20" height="20" fill="#7a00f0"/>
          <rect x="1223" y="201" width="21" height="15" fill="#7a00f0"/>
          <rect x="391" y="329" width="10" height="9" fill="#7a00f0"/>
          <rect x="391" y="400" width="10" height="10" fill="#7a00f0"/>
          <rect x="223" y="328" width="2" height="10" fill="#7a00f0"/>
          <rect x="233" y="328" width="2" height="10" fill="#7a00f0"/>
        </g>
        <path d="M216 207L224 203V196H234V207L226 212Z" fill="#ffff00"/>
        <rect x="385.500" y="200.500" width="22" height="16" fill="none" stroke="#7a00f0"/>
        <path d="M385 200l22 17M407 200l-22 17M396 200v17M385 208h22" stroke="#7a00f0" stroke-width=".7"/>
        <g fill="none" stroke="#078a07">
          <circle cx="183" cy="206" r="12.500"/><circle cx="183" cy="405" r="12.500"/><circle cx="228" cy="180" r="13"/>
          <circle cx="396" cy="180" r="13"/><circle cx="563" cy="180" r="13"/><ellipse cx="730" cy="180" rx="13" ry="13"/><circle cx="1066" cy="180" r="13"/><circle cx="1233" cy="180" r="13"/>
          <path d="M170 195.500H224M170 206.500H216M170 333.500H224M170 404.500H224M170 464.500H224M170 188l8 7M170 327l17 15M170 457l15 15M170 398l13 7"/>
        </g>
        <g class="crisp" stroke="#8e0000">
          <path d="M246.500 168V473M304.500 168V473M378.500 168V473M413.500 168V473M546.500 168V473M581.500 168V473M656.500 168V473M693.500 168V473M807.500 168V473M1141.500 168V473M1192.500 168V473"/>
          <path d="M234 195.500H1366M234 333.500H1366M170 464.500H1366"/>
          <path d="M730.500 168V473M1065.500 168V473M1233.500 168V473M563.500 168V473" stroke="#b02020"/>
        </g>
        <path class="crisp" d="M229.500 206V473" stroke="#ff1010"/>
        <path class="crisp" d="M234 404.500H1366" stroke="#e80000"/>
        <path d="M297 168L601 473" stroke="#8e0000" stroke-width=".8"/>
        <path d="M262 402l9 10M271 402l-9 10" stroke="#f00" stroke-width="1.200"/>
        <rect x="223" y="385" width="4" height="38" fill="#00e600"/>
        <path d="M225 374l-4 14h8z" fill="#00e600"/>
        <path d="M226 423H262" stroke="#f00" stroke-width="3"/><path d="M262 418l11 5-11 5z" fill="#f00"/>
        <path d="M193 427.500H224" stroke="#fff"/><rect x="224" y="426" width="3" height="3" fill="#e87020"/>
        <path d="M234 376l4 6 4-6M238 382v6" fill="none" stroke="#00e600"/>
        <g class="cad-t" fill="#b8b8b8">
          <text x="183" y="211" text-anchor="middle" font-size="14">D</text>
          <text x="396" y="186" text-anchor="middle" font-size="14" fill="#a870a8">2</text>
          <text x="563" y="186" text-anchor="middle" font-size="14" fill="#a870a8">3</text>
          <text x="730" y="186" text-anchor="middle" font-size="14" fill="#a870a8">4</text>
          <text x="1066" y="186" text-anchor="middle" font-size="14" fill="#a870a8">5</text>
          <text x="1233" y="186" text-anchor="middle" font-size="14" fill="#a870a8">6</text>
          <text class="big" transform="translate(184 384) rotate(-90)" font-size="15" fill="#d4d4d4">1400</text>
          <text transform="translate(217 243) rotate(-90)" font-size="8">3C20</text>
          <text transform="translate(217 200) rotate(-90)" font-size="8">3C20</text>
          <text transform="translate(246 386) rotate(-90)" font-size="8">3C35</text>
          <text transform="translate(192 427) rotate(-90)" font-size="8">雨篷梁-1</text>
          <text transform="translate(192 392) rotate(-90)" font-size="7">200*500</text>
          <text transform="translate(199 427) rotate(-90)" font-size="7">A8@100/200(1)  2C22+(2C12)</text>
          <text transform="translate(206 427) rotate(-90)" font-size="7">G6C12</text>
          <text transform="translate(189 410)" font-size="14" text-anchor="middle">C</text>
        </g>
        <rect x="207.500" y="361.500" width="10" height="29" fill="none" stroke="#999"/>
      </svg>

      <div class="row snaprow">
        <div class="card c51">
          <span class="grip"></span>
          <span class="b"><svg class="i"><use href="#orth"/></svg>正交</span>
          <span class="b act"><svg class="i"><use href="#snap"/></svg>对象捕捉</span>
          <span class="b"><svg class="i"><use href="#dyn"/></svg>动态输入</span>
        </div>
        <div class="card c52">
          <span class="grip"></span>
          <span class="b"><svg class="i"><use href="#xp"/></svg>交点</span>
          <span class="b act seg seg1"><svg class="i"><use href="#perp"/></svg>垂点</span><span class="b act seg seg2"><svg class="i"><use href="#midp"/></svg>中点</span>
          <span class="b"><svg class="i"><use href="#vert"/></svg>顶点</span>
          <span class="b"><svg class="i"><use href="#coord"/></svg>坐标</span>
        </div>
        <div class="card c53">
          <span class="combo w57">不偏移<i class="ar"></i></span><span class="s sn"></span>
          <span class="lb">X=</span><span class="num w58">0<span class="spin"></span></span><span class="lb">mm</span>
          <span class="lb y">Y=</span><span class="num w58">0<span class="spin"></span></span><span class="lb">mm</span><span class="s sn"></span>
          <span class="cb"></span><span class="rot-l">旋转</span><span class="num w68">0.000<span class="spin"></span></span><span class="lb deg">°</span>
        </div>
      </div>

      <section class="lower">
        <div class="split"><svg width="11" height="11" viewBox="0 0 11 11"><rect x=".5" y=".5" width="10" height="10" fill="#eee" stroke="#777"/><path d="M1 1l9 9M10 1l-9 9" stroke="#a04040"/></svg></div>
        <div class="panel">
          <div class="gridbar">
            <span class="b"><svg class="i sm"><use href="#cp2"/></svg>复制跨数据</span>
            <span class="b dis"><svg class="i sm"><use href="#pst"/></svg>粘贴跨数据</span>
            <span class="b">输入当前列数据</span>
            <span class="b">删除当前列数据</span>
            <span class="b">页面设置</span>
            <span class="b">调换起始跨</span>
            <span class="b">悬臂钢筋代号</span>
          </div>
          <div class="tablewrap">
            <table class="rebar">
              <colgroup>
                <col class="c32w"><col class="c40w"><col class="c62w"><col class="c61w"><col class="c41w"><col class="c41w"><col class="c41w"><col class="c41w"><col class="c41w"><col class="c61w"><col class="c81w"><col class="c81w"><col class="c81w"><col class="c81w"><col class="c81w"><col class="c81w"><col class="c81w"><col class="c81w"><col class="c81w"><col class="c81w">
              </colgroup>
              <thead>
                <tr class="h1">
                  <th rowspan="2"></th><th rowspan="2">跨号</th><th colspan="2">标高(m)</th><th colspan="7">构件尺寸(mm)</th><th rowspan="2">上通长筋</th><th colspan="3">上部钢筋</th><th colspan="2">下部钢筋</th><th colspan="3" class="side">侧面钢筋</th>
                </tr>
                <tr class="h2">
                  <th>起点标高</th><th>终点标高</th><th class="a">A1</th><th class="a">A2</th><th class="a">A3</th><th class="a">A4</th><th>跨长</th><th>截面(B*H)</th><th>距左边线距离</th><th>左支座钢筋</th><th class="hot">跨中钢筋</th><th>右支座钢筋</th><th>下通长筋</th><th>下部钢筋</th><th>侧面通长筋</th><th>侧面原位标注</th><th></th>
                </tr>
              </thead>
              <tbody>
                <tr>
                  <td class="no">1</td><td class="sp">1</td><td>4.45</td><td>4.45</td><td>(100)</td><td>(200)</td><td>(300)</td><td></td><td>(6600)</td><td>(200*500)</td><td>(100)</td><td>2虫22</td><td></td><td></td><td>3虫20</td><td></td><td>3虫25</td><td>G6虫12</td><td></td><td></td>
                </tr>
                <tr class="cur">
                  <td class="no">2</td><td class="sp">2</td><td>4.45</td><td>4.45</td><td></td><td>(100)</td><td>(100)</td><td>(200)</td><td>(2400)</td><td>(200*500)</td><td>(100)</td><td></td><td>3虫20</td><td class="edit"><span class="caret"></span><span class="dots">···</span><span class="hdl"></span></td><td></td><td></td><td>2虫14</td><td></td><td>G6虫12</td><td></td>
                </tr>
              </tbody>
            </table>
          </div>
          <div class="hscroll">
            <span class="sb-arrow">‹</span><span class="sb-thumb"></span><span class="sb-arrow end">›</span>
          </div>
        </div>
      </section>
    </main>
  </div>

  <footer class="status">
    <span class="st w148">X=18007 Y=11625</span><span class="st w78">层高:4.5m</span><span class="st w98">底标高:-0.05m</span><span class="st w48">1(4)</span><span class="st msg">按鼠标左键选择梁图元,按右键或ESC退出;可以通过回车键及shift+"→←↑"光标键在跨之间、上下输入框之间进行切换</span><span class="st fps">401.8 FPS</span>
  </footer>

  <footer class="taskbar">
    <div class="start"><svg width="17" height="17" viewBox="0 0 17 17"><path d="M0 2.500l7-1v6.500H0zM8 1.300L17 0v8H8zM0 9h7v6.500l-7-1zM8 9h9v8l-9-1.300z" fill="#fff"/></svg></div>
    <div class="search">
      <svg width="22" height="22" viewBox="0 0 22 22"><circle cx="11" cy="11" r="8.500" fill="none" stroke="#e8e8e8" stroke-width="2.500"/></svg>
      <span>在这里输入你要搜索的内容</span>
      <svg class="mic" width="11" height="20" viewBox="0 0 11 20"><rect x="3" y="1" width="5" height="11" rx="2.500" fill="none" stroke="#aaa"/><path d="M1 9c0 6 9 6 9 0M5.500 14v4M2 18.500h7" fill="none" stroke="#aaa"/></svg>
    </div>
    <div class="tasks">
      <span class="tk"><svg width="20" height="18" viewBox="0 0 20 18"><rect x="5.500" y="1.500" width="9" height="15" fill="none" stroke="#fff"/><path d="M3 4H1v10h2M17 4h2v10h-2" fill="none" stroke="#fff"/></svg></span>
      <span class="tk"><svg width="22" height="22" viewBox="0 0 22 22"><path d="M11 11C5 12 1 8 3 4s7-2 8 7zM11 11c-1-6 3-9 7-8s3 7-7 8zM11 11c6-1 10 3 8 7s-7 2-8-7zM11 11c1 6-3 10-7 8s-2-7 7-8z" fill="#ddd"/></svg></span>
      <span class="tk"><svg width="22" height="24" viewBox="0 0 22 24"><path d="M3 14h15c1-6-3-9-7-9-5 0-9 4-8 10 1 5 9 7 14 3" fill="none" stroke="#eee" stroke-width="3"/><path d="M3 20C1 14 12 3 19 2" fill="none" stroke="#eee"/></svg></span>
      <span class="tk"><svg width="20" height="20" viewBox="0 0 20 20"><path d="M16 4A8 8 0 1 0 18 11h-7a4 4 0 1 1 2-5" fill="none" stroke="#aaa" stroke-width="1.500"/></svg></span>
      <span class="tk shift"><svg width="22" height="22" viewBox="0 0 22 22"><path d="M3 13h16c1-7-3-11-8-11S2 6 2 12c0 7 9 10 16 6v-4c-4 3-10 2-10-1" fill="#1574d8" stroke="#1574d8"/><path d="M7 9h8c0-4-8-4-8 0z" fill="#0c161c"/></svg></span>
      <span class="tk"><svg width="24" height="24" viewBox="0 0 24 24"><circle cx="11" cy="13" r="8" fill="none" stroke="#2a9ae8" stroke-width="3"/><path d="M5 12h13" stroke="#2a9ae8" stroke-width="3"/><path d="M1 22C3 14 14 3 22 2c1 3-2 6-3 7" fill="none" stroke="#f0c040" stroke-width="1.500"/></svg></span>
      <span class="tk"><svg width="22" height="20" viewBox="0 0 22 20"><path d="M1 2h8l2 2h10v15H1z" fill="#f2cf70"/><path d="M1 7h20v12H1z" fill="#fbe59e"/><rect x="7" y="12" width="8" height="7" fill="#3a9ae0"/></svg></span>
      <span class="tk und"><svg width="22" height="26" viewBox="0 0 22 26"><path d="M20 4H7C3 8 2 16 7 21c5 4 12 1 12-5 0-4-4-6-8-4" fill="none" stroke="#1b8fe8" stroke-width="4"/></svg></span>
      <span class="tk und"><svg width="24" height="26" viewBox="0 0 24 26"><circle cx="12" cy="13" r="10" fill="#8fc848" stroke="#ddd"/><path d="M7 12h10c0-5-9-5-9 1s7 6 9 3" fill="none" stroke="#fff" stroke-width="2"/></svg></span>
      <span class="tk und on"><svg width="24" height="24" viewBox="0 0 24 24"><rect width="24" height="24" rx="4" fill="#0e90f5"/><path d="M12 4v16M4 12h16M12 4a3 3 0 0 1 3 3M12 20a3 3 0 0 1-3-3M4 12a3 3 0 0 1 3-3M20 12a3 3 0 0 1-3 3" fill="none" stroke="#fff" stroke-width="2"/></svg></span>
    </div>
    <div class="tray">
      <span class="link">链接</span>
      <span class="cpu"><span>25%</span><span>CPU使用</span></span>
      <svg class="ty" width="14" height="8" viewBox="0 0 14 8"><path d="M1 7l6-6 6 6" fill="none" stroke="#eee" stroke-width="1.300"/></svg>
      <svg class="ty" width="16" height="14" viewBox="0 0 16 14"><rect x="1" y="5" width="14" height="8" fill="#fff"/><path d="M3 0v5M6 0v5" stroke="#fff"/></svg>
      <svg class="ty" width="17" height="15" viewBox="0 0 17 15"><path d="M1 14C1 7 7 1 15 1M5 14c0-5 4-9 10-9M9 14c0-2 2-5 6-5" fill="none" stroke="#ccc"/></svg>
      <svg class="ty" width="16" height="15" viewBox="0 0 16 15"><path d="M1 5h3l4-4v13l-4-4H1z" fill="none" stroke="#eee"/><path d="M11 4q2 3.500 0 7M13 2q4 5.500 0 11" fill="none" stroke="#eee"/></svg>
      <svg class="ty" width="22" height="14" viewBox="0 0 22 14"><rect x=".5" y=".5" width="21" height="13" fill="none" stroke="#eee"/><path d="M3 4h16M3 7h16M6 10h10" stroke="#eee" stroke-dasharray="1.500 1"/></svg>
      <span class="ime">中</span>
      <span class="slogo small">S</span>
      <span class="clock"><span>12:01</span><span>2018/2/15</span></span>
      <span class="notice"><svg width="16" height="14" viewBox="0 0 16 14"><path d="M0 0h16v14H0z" fill="#fff"/><path d="M2 3h12M2 6h12M2 9h9" stroke="#222"/></svg><span class="badge">21</span></span>
    </div>
  </footer>
</div>

<div class="topbadge"><span>66</span></div>
<svg class="marks" width="1366" height="768" viewBox="0 0 1366 768">
  <ellipse cx="927.500" cy="540" rx="53.500" ry="26" transform="rotate(-3 927.500 540)" fill="none" stroke="#f00" stroke-width="3"/>
  <ellipse cx="928" cy="610" rx="44.500" ry="36.500" fill="none" stroke="#f00" stroke-width="3"/>
</svg>
<div class="imebar">
  <span class="slogo">S</span>
  <span class="ib-zh">中</span><span class="ib-p">°,</span>
  <svg width="18" height="18" viewBox="0 0 18 18"><circle cx="9" cy="9" r="7.500" fill="#fff" stroke="#1a6fc0" stroke-width="1.500"/><circle cx="6.500" cy="7" r="1" fill="#1a6fc0"/><circle cx="11.500" cy="7" r="1" fill="#1a6fc0"/><path d="M5 11q4 3 8 0" fill="none" stroke="#1a6fc0"/></svg>
  <svg width="14" height="18" viewBox="0 0 14 18"><rect x="4" y="0" width="6" height="11" rx="3" fill="#1a6fc0"/><path d="M1 7c0 7 12 7 12 0M7 13v3M3 17h8" fill="none" stroke="#1a6fc0" stroke-width="1.500"/></svg>
  <svg width="17" height="15" viewBox="0 0 17 15"><rect width="17" height="15" rx="1" fill="#1a6fc0"/><path d="M2 4h13M2 7h13M4 11h9" stroke="#fff" stroke-dasharray="1.500 1"/></svg>
  <svg width="17" height="18" viewBox="0 0 17 18"><circle cx="7" cy="5" r="3.500" fill="#c0c8d0"/><path d="M1 17c0-7 12-7 12 0z" fill="#c0c8d0"/><rect x="7" y="11" width="10" height="7" fill="#8a949c"/></svg>
  <svg width="16" height="16" viewBox="0 0 16 16"><path d="M5 0l3 2 3-2 5 3-2 4-2-1v10H4V6L2 7 0 3z" fill="#1a6fc0"/></svg>
  <svg width="16" height="17" viewBox="0 0 16 17"><path d="M15 3l-3 3-2-2 3-3a5 5 0 0 0-6 6L0 14l3 3 7-7a5 5 0 0 0 5-7z" fill="#1a6fc0"/></svg>
</div>
</body>
</html>
```

FILE: styles.css
```css
* { box-sizing: border-box; }
html, body { margin: 0; padding: 0; width: 1366px; height: 768px; overflow: hidden; }
body { font-family: "Noto Sans CJK SC", "Noto Sans", sans-serif; font-size: 12px; color: #1c1c1c; background: #eee; }
.defs { position: absolute; width: 0; height: 0; }
.app { display: flex; flex-direction: column; width: 1366px; height: 768px; }

.title { height: 23px; background: #fff; display: flex; align-items: center; position: relative; flex: none; }
.logo { width: 15px; height: 15px; margin: 0 6px 0 2px; }
.title-text { font-family: "Open Sans", "Noto Sans CJK SC", sans-serif; font-size: 12.55px; white-space: nowrap; color: #222; }
.winbtns { margin-left: auto; display: flex; gap: 35px; padding-right: 18px; }

.menu { height: 31px; flex: none; background: #f1f1f1; display: flex; align-items: center; padding-left: 7px; white-space: nowrap; }
.m { margin-right: 10.5px; letter-spacing: 0; }
.m.last-m { margin-right: 9px; }
.tip-card { width: 185px; height: 27px; margin-left: -4px; padding-left: 28px; line-height: 27px; color: #0b6a6c; background: linear-gradient(#fff, #f0f0f0); border-radius: 3px; font-size: 12px; }
.user-card { width: 240px; height: 27px; margin-left: 4px; padding: 0 0 0 4px; background: linear-gradient(#fff, #f0f0f0); display: flex; align-items: center; gap: 3px; }
.user-card .ar { margin: 0 3px 0 6px; }
.beans { margin-left: 6px; }
.bell { margin-left: 6px; }
.user-card .more { margin-right: 7px; margin-bottom: 6px; }

.toprow { height: 30px; flex: none; display: flex; gap: 2px; background: #eee; }
.card { height: 100%; display: flex; align-items: center; white-space: nowrap; background: linear-gradient(#fff, #fbfbfb 40%, #efefef); border-radius: 3px; }
.c1 { width: 151px; padding-left: 5px; }
.c1 .s { margin: 0 6px 0 6px; }
.c2 { width: 547px; padding-left: 4px; }
.c2 .b { margin-right: 7px; }
.c3 { width: 663px; margin-left: 1px; padding-left: 2px; }
.open { width: 18px; margin-left: 8px; }
.save { margin-left: 11px; }
.ar.t { margin: 0 0 0 4px; }
.ar.gr { border-top-color: #999; margin-left: 6px; }
.more { margin-left: auto; margin-right: 6px; font-size: 14px; font-weight: 700; line-height: 1; color: #222; align-self: flex-start; margin-top: 5px; }

.b { display: inline-flex; align-items: center; gap: 4px; margin-right: 8px; height: 22px; flex: none; }
.i { width: 16px; height: 16px; flex: none; display: block; }
.i.sm { width: 14px; height: 14px; }
.sig { width: 16px; text-align: center; font-weight: 700; font-size: 14px; font-family: "DejaVu Sans", sans-serif; }
.ar { display: inline-block; width: 0; height: 0; border-left: 3px solid transparent; border-right: 3px solid transparent; border-top: 3px solid #111; flex: none; margin: 0 -1px 0 2px; font-style: normal; }
.ar.n { margin: 0 0 0 -2px; }
.ar.after { margin: 0 7px 0 -3px; }
.s { width: 1px; height: 18px; background: #bcbcbc; margin: 0 5px 0 -1px; flex: none; }
.s.sn { margin: 0 2px 0 4px; }
.s.s3 { margin: 0 6px 0 2px; }
.dis { color: #a4a4a4; }
.b.bx { background: #fff; height: 24px; padding: 0 2px 0 1px; margin-right: 4px; }
.menu-b { margin-right: 8px; }
.menu-b .ar { margin: 0 0 0 4px; }
.menu-b .i { margin-top: 1px; }

.work { height: 620px; flex: none; display: flex; }
.nav { width: 165px; flex: none; display: flex; flex-direction: column; }
.nav-head { height: 15px; background: #0552de; color: #fff; font-size: 12px; line-height: 15px; display: flex; justify-content: space-between; padding-left: 1px; flex: none; letter-spacing: 1px; }
.pins { display: flex; gap: 13px; align-items: center; padding-right: 5px; }
.navbtn { font: inherit; color: #1c1c1c; height: 23px; width: 165px; background: linear-gradient(#fff, #ececec); border: 1px solid #a8a8a8; border-right-color: #777; border-bottom-color: #777; padding: 0; flex: none; margin-bottom: -0.5px; }
.navbtn.on { background: linear-gradient(#fbfbfb, #e4e4e4); }
.tree { flex: 1; margin: 1px 1px 0 2px; background: #fff; border: 1px solid #a8a8a8; font-family: "Noto Sans Mono CJK SC", "Liberation Mono", "Noto Sans CJK SC", monospace; }
.tree-tools { display: flex; gap: 7px; padding: 5px 0 0 4px; height: 28px; }
.tr { height: 16px; display: flex; align-items: center; position: relative; line-height: 16px; white-space: nowrap; }
.ch { width: 10px; height: 10px; margin: 0 6px 0 6px; flex: none; }
.fd { width: 16px; height: 14px; margin-right: 6px; flex: none; }
.tr.sub { padding-left: 42px; background: repeating-linear-gradient(#777 0 1px, transparent 1px 2px) 11px 0/1px 100% no-repeat; }
.tr.sub::before { content: ""; position: absolute; left: 30px; top: 7px; width: 11px; border-top: 1px dotted #666; }
.tr.sub::after { content: ""; position: absolute; left: 30px; top: -8px; height: 16px; border-left: 1px dotted #666; }
.ti { width: 15px; height: 15px; margin-right: 5px; flex: none; }
.tr.sub.selrow { background: repeating-linear-gradient(#777 0 1px, transparent 1px 2px) 11px 0/1px 100% no-repeat, linear-gradient(90deg, transparent 40px, #d0d0d0 40px, #d0d0d0 97px, transparent 97px); }
.cad { width: 15px; height: 14px; margin-left: 6px; flex: none; }
.newb { position: absolute; left: 108px; top: -3px; font: 700 8px/9px "Liberation Sans", sans-serif; color: #222; background: #ffe600; padding: 0 1px; }

.right { width: 1201px; flex: none; margin-left: 0; padding-left: 6px; display: flex; flex-direction: column; overflow: hidden; }
.row { display: flex; flex: none; }
.r2 { height: 27px; margin-bottom: 1px; }
.r2 .card { width: 790px; padding-left: 3px; }
.r2 .b { margin-right: 7.5px; }
.r3 { height: 25px; margin-bottom: 3px; gap: 3px; }
.r4 { height: 28px; gap: 4px; }
.c31 { width: 637px; padding-left: 3px; }
.c32 { width: 422px; padding-left: 3px; }
.c32 .b { margin-right: 7.5px; }
.c41 { width: 1159px; padding-left: 3px; }
.c42 { width: 32px; padding-left: 3px; background: #f6f6f6; }
.grip { width: 2px; height: 15px; background: repeating-linear-gradient(#aaa 0 2px, transparent 2px 4px); margin-right: 5px; flex: none; }
.grip.g-tight { margin-right: 3px; }
.combo { display: inline-flex; align-items: center; background: #fff; height: 22px; padding: 0 3px 0 2px; margin-right: 2px; position: relative; flex: none; }
.combo .ar { position: absolute; right: 3px; top: 10px; margin: 0; }
.w58 { width: 58px; }
.w70 { width: 70px; }
.combo.w54 { width: 54px; margin-left: -3px; margin-right: 7px; }
.w57 { width: 57px; margin-left: 5px; }
.b.act { border: 1px solid #2f86d8; background: #e4f0fb; height: 27px; padding: 0 3px; gap: 3px; margin-right: 4px; margin-left: -4px; }
.c51 .b.act { margin-right: 1px; padding-right: 2px; }
.b.act.seg { margin: 0; padding: 0 3px; width: 51px; gap: 4px; }
.b.act.seg1 { margin-left: -4px; }
.b.act.seg2 { margin-right: 5px; }

.cad-canvas { display: block; flex: none; width: 1196px; height: 305px; margin-left: -1px; }
.crisp { shape-rendering: crispEdges; }
.cad-t { font-family: "Liberation Mono", "Noto Sans CJK SC", monospace; }
.cad-t .big { font-family: "Liberation Sans", sans-serif; }

.snaprow { height: 27px; margin-top: 2px; gap: 2px; }
.c51 { width: 208px; padding-left: 3px; margin-left: 1px; }
.c52 { width: 264px; padding-left: 3px; }
.c53 { width: 409px; }
.lb { color: #777; font-family: "Noto Sans", sans-serif; margin: 0 2px; }
.lb.y { margin-left: 5px; }
.deg { margin-left: 4px; }
.num { height: 22px; border: 1px solid #8a8a8a; background: #f4f4f4; color: #888; display: flex; align-items: center; justify-content: flex-end; padding-right: 17px; position: relative; font-family: "Noto Sans", sans-serif; }
.w68 { width: 68px; }
.num.w58 { width: 58px; }
.spin { position: absolute; right: 4px; top: 5px; width: 6px; height: 11px; background: linear-gradient(135deg, transparent 50%, #888 50%) 0 0/3px 3px no-repeat, linear-gradient(225deg, transparent 50%, #888 50%) 3px 0/3px 3px no-repeat, linear-gradient(45deg, transparent 50%, #888 50%) 0 8px/3px 3px no-repeat, linear-gradient(315deg, transparent 50%, #888 50%) 3px 8px/3px 3px no-repeat; }
.cb { width: 11px; height: 11px; border: 1px solid #888; background: #f8f8f8; margin: 0 9px 0 2px; flex: none; }
.rot-l { margin-right: 4px; }

.lower { flex: 1; display: flex; margin-top: 5px; min-height: 0; margin-left: -1px; }
.split { width: 12px; flex: none; background: repeating-linear-gradient(#c4c4c4 0 2px, transparent 2px 4px) center 14px/6px 100% no-repeat; }
.split svg { display: block; margin-top: 1px; }
.panel { width: 1184px; flex: none; display: flex; flex-direction: column; background: #fff; }
.gridbar { height: 25px; flex: none; display: flex; align-items: center; padding-left: 4px; background: linear-gradient(#fff, #eeeeee); }
.gridbar .b { margin-right: 9.5px; gap: 6px; }
.tablewrap { height: 156px; flex: none; overflow: hidden; background: #fff; }
.rebar { border-collapse: collapse; table-layout: fixed; width: 1271px; font-family: "Noto Sans Mono CJK SC", "Liberation Mono", "Noto Sans CJK SC", monospace; font-size: 12px; line-height: 12px; }
.c32w { width: 32px; } .c40w { width: 40px; } .c62w { width: 62px; } .c61w { width: 61px; } .c41w { width: 41px; } .c81w { width: 81px; }
.rebar th, .rebar td { border: 1px solid #c2c2c2; padding: 0; overflow: hidden; white-space: nowrap; font-weight: 400; height: 19px; }
.rebar th { background: linear-gradient(#fff, #ededed); text-align: center; }
.rebar .h1 th { height: 20px; }
.rebar th.side { padding-left: 10px; text-align: center; }
.rebar td { padding-left: 2px; }
.rebar td.no { text-align: center; background: linear-gradient(#fff, #f4f4f4); padding-left: 0; }
.rebar td.sp { border-right: 1px solid #222; }
.rebar th.a { font-size: 10px; font-weight: 400; }
.rebar th.hot { background: linear-gradient(#fbe2ad, #f3c26d); color: #6a0a9a; }
.rebar tr.cur td { background: #a8c9ef; }
.rebar tr.cur td.no { background: #ffd08a; color: #5a0a8a; }
.rebar tr.cur td.edit { background: #c9def5; border: 2px solid #111; position: relative; padding: 0; }
.caret { position: absolute; left: 2px; top: 2px; width: 1px; height: 13px; background: #111; }
.dots { position: absolute; right: 0; top: 0; width: 15px; height: 15px; background: #e4e4e4; border: 1px solid #aaa; font: 700 12px/11px "Liberation Sans", sans-serif; text-align: center; }
.hdl { position: absolute; right: -2px; bottom: -2px; width: 4px; height: 4px; background: #666; }
.hscroll { height: 16px; flex: none; margin-bottom: 1px; display: flex; align-items: center; background: #f0f0f0; border-left: 1px solid #a8a8a8; }
.sb-arrow { width: 17px; flex: none; text-align: center; font: 700 15px/14px "DejaVu Sans", sans-serif; color: #444; }
.sb-thumb { width: 547px; height: 100%; background: #c8c8c8; }
.sb-arrow.end { margin-left: auto; }

.status { height: 24px; flex: none; background: #f0f0f0; display: flex; gap: 2px; padding-top: 2px; font-family: "Noto Sans Mono CJK SC", "Liberation Mono", "Noto Sans CJK SC", monospace; }
.st { height: 21px; line-height: 20px; border: 1px solid #dcdcdc; padding-left: 1px; white-space: nowrap; overflow: hidden; flex: none; }
.w148 { width: 148px; } .w78 { width: 78px; } .w98 { width: 98px; } .w48 { width: 48px; }
.msg { width: 914px; }
.fps { width: 70px; }

.taskbar { height: 40px; flex: none; background: #0b161d; display: flex; color: #e8e8e8; }
.start { width: 48px; background: #000; display: flex; align-items: center; justify-content: center; flex: none; }
.search { width: 344px; flex: none; background: #333; display: flex; align-items: center; color: #959595; font-size: 14px; padding-left: 8px; gap: 6px; }
.mic { margin-left: auto; margin-right: 16px; }
.tasks { display: flex; flex: none; }
.tk { width: 50px; height: 40px; display: flex; align-items: center; justify-content: center; flex: none; position: relative; }
.tk.shift { margin-left: 5px; margin-right: -1px; }
.tk.und::after { content: ""; position: absolute; left: 5px; right: 5px; bottom: 0; height: 2px; background: #79b8ef; }
.tk.on { background: #30383d; margin-left: -1px; }
.tk.on::after { left: 0; right: 0; }
.tray { flex: 1; display: flex; align-items: center; position: relative; font-size: 12px; min-width: 0; }
.link { margin-left: 55px; color: #cfcfcf; width: 43px; }
.cpu { display: flex; flex-direction: column; align-items: center; line-height: 18px; width: 48px; }
.ty { margin-left: 9px; flex: none; }
.cpu + .ty { margin-left: 19px; }
.ime { margin-left: 9px; font-size: 14px; color: #fff; }
.slogo { display: inline-block; width: 25px; height: 25px; background: #f0401c; color: #fff; border-radius: 5px; transform: rotate(-10deg); font: 700 22px/25px "Liberation Sans", sans-serif; text-align: center; flex: none; }
.slogo.small { width: 14px; height: 14px; font-size: 13px; line-height: 14px; margin-left: 15px; border-radius: 3px; }
.clock { display: flex; flex-direction: column; align-items: center; margin-left: 24px; line-height: 18px; width: 68px; font-size: 13px; }
.notice { margin-left: 5px; position: relative; display: block; width: 30px; height: 30px; padding-top: 7px; }
.badge { position: absolute; left: 4px; top: 14px; width: 18px; height: 18px; border-radius: 50%; background: #333; border: 1px solid #999; color: #fff; font: 700 11px/16px "Liberation Sans", sans-serif; text-align: center; }

.topbadge { position: absolute; left: 835px; top: -30px; width: 48px; height: 48px; border-radius: 50%; background: #3fb950; border: 3px solid #d4d4d4; box-shadow: 0 1px 4px rgba(0,0,0,.35); color: #fff; font: 700 12px/14px "Liberation Sans", sans-serif; text-align: center; padding-top: 30px; }
.marks { position: absolute; left: 0; top: 0; pointer-events: none; }
.imebar { position: absolute; left: 928px; top: 689px; width: 203px; height: 23px; background: #fff; border: 1px solid #c6d6e8; display: flex; align-items: center; gap: 6px; padding-left: 29px; }
.imebar .slogo { position: absolute; left: -2px; top: -3px; }
.ib-zh { font-size: 15px; font-weight: 700; color: #1a6fc0; }
.ib-p { font-size: 13px; font-weight: 700; color: #1a6fc0; width: 14px; }
```
